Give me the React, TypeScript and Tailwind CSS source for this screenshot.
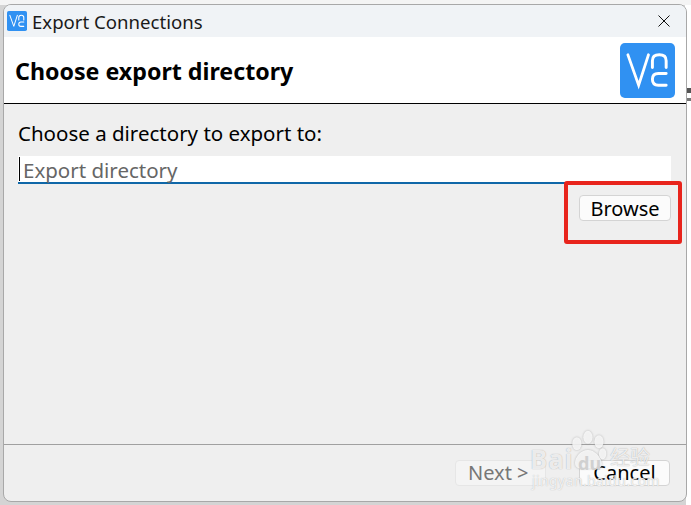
const font = { fontFamily: '"Noto Sans", "Noto Sans CJK SC", sans-serif' };

function VncLogo({ className }: { className?: string }) {
  return (
    <svg viewBox="0 0 56 56" className={className}>
      <rect width="56" height="56" rx="5" fill="#3091f2" />
      <g fill="none" stroke="#fff" strokeWidth="3" strokeLinecap="round">
        <path d="M8 12 L19 43 L29 12" strokeWidth="2.8" />
        <path d="M33 25 V18 Q33 12 40 12 Q47 12 47 18 V25" />
        <path d="M47 31 H39 Q33 31 33 37 Q33 43 39 43 H47" />
      </g>
    </svg>
  );
}

function Watermark() {
  return (
    <div className="absolute left-[528px] top-[428px] h-[70px] w-[130px] text-white/80" style={font}>
      <svg viewBox="0 0 50 50" className="absolute left-[36px] top-0 h-[46px] w-[46px] drop-shadow-[0_0_1px_rgba(120,120,120,0.6)]" fill="currentColor">
        <ellipse cx="14" cy="17" rx="5" ry="7" />
        <ellipse cx="26" cy="10" rx="5" ry="7" />
        <ellipse cx="38" cy="15" rx="5" ry="7" />
        <ellipse cx="42" cy="28" rx="4" ry="6" />
        <path d="M26 24 C18 24 12 32 12 38 C12 46 22 44 27 44 C33 44 42 46 41 38 C40 31 33 24 26 24 Z" />
      </svg>
      <span className="absolute left-[2px] top-[13px] text-[26px] font-bold leading-[36px] tracking-[1px] [text-shadow:0_0_1px_#999]">Bai</span>
      <span className="absolute left-[50px] top-[22px] text-[18px] font-bold leading-[26px] text-[#d0d0d0]">du</span>
      <span className="absolute left-[82px] top-[17px] text-[20px] leading-[26px] [text-shadow:0_0_1px_#999]">经验</span>
      <span className="absolute left-[4px] top-[43px] text-[14px] leading-[20px] tracking-[0.4px] [text-shadow:0_0_1px_#aaa]">jingyan.baidu.com</span>
    </div>
  );
}

export default function App() {
  return (
    <div className="relative h-[505px] w-[691px] overflow-hidden bg-[#d4d4d4]" style={font}>
      <div className="absolute right-0 top-0 h-[130px] w-[6px] bg-white" />
      <div className="absolute right-0 top-[88px] h-[5px] w-[6px] bg-[#555]" />
      <div className="absolute right-0 top-[98px] h-[3px] w-[6px] bg-[#777]" />
      <div className="absolute right-0 top-[130px] h-[375px] w-[5px] bg-white" />
      <div className="absolute left-0 top-0 h-[5px] w-full bg-[#f4f4f4]" />

      <div className="relative ml-[3px] mt-[4px] flex h-[498px] w-[684px] flex-col overflow-hidden rounded-[8px] border border-[#a8a8a8] bg-[#efefef]">
        <div className="flex h-[32px] shrink-0 items-center bg-[#f0f3f6] pl-[3px] pr-[16px]">
          <VncLogo className="h-[20px] w-[20px]" />
          <span className="ml-[5px] mt-[1px] text-[18.6px] leading-[24px] text-[#1a1a1a]">Export Connections</span>
          <svg viewBox="0 0 12 12" className="ml-auto h-[12px] w-[12px]" fill="none" stroke="#111" strokeWidth="1">
            <path d="M0.5 0.5 L11.5 11.5 M11.5 0.5 L0.5 11.5" />
          </svg>
        </div>

        <div className="flex h-[67px] shrink-0 items-center justify-between border-b border-black bg-white pl-[11px] pr-[11px]">
          <span className="mt-[2px] text-[23.2px] font-bold leading-[32px] text-black">Choose export directory</span>
          <VncLogo className="h-[55px] w-[55px]" />
        </div>

        <div className="flex flex-1 flex-col px-[14px] pt-[16px]">
          <span className="text-[20.5px] leading-[26px] text-black">Choose a directory to export to:</span>
          <div className="mt-[10px] flex h-[28px] w-[653px] items-center border-b-2 border-[#0f67a8] bg-white pl-[1px]">
            <span className="h-[24px] w-px bg-black" />
            <span className="ml-[3px] mt-[3px] text-[20.5px] leading-[25px] text-[#666]">Export directory</span>
          </div>
          <div className="mt-[11px] flex w-[653px] justify-end">
            <button className="h-[26px] w-[92px] rounded-[4px] border border-[#d4d4d4] bg-[#fbfbfb] pt-[1px] text-[20px] leading-[24px] text-black">
              Browse
            </button>
          </div>
        </div>

        <div className="flex h-[57px] shrink-0 items-start justify-end gap-[33px] border-t border-[#a0a0a0] pr-[16px] pt-[15px]">
          <button className="h-[26px] w-[91px] rounded-[4px] border border-[#e6e6e6] bg-[#f4f4f4] pl-[2px] text-left text-[20px] leading-[24px] text-[#777]">
            <span className="ml-[10px]">Next &gt;</span>
          </button>
          <button className="h-[26px] w-[91px] rounded-[4px] border border-[#d4d4d4] bg-[#fbfbfb] text-[20px] leading-[24px] text-black">
            Cancel
          </button>
        </div>
      </div>

      <div className="absolute left-[564px] top-[181px] h-[63px] w-[118px] rounded-[3px] border-[4px] border-[#e8241c]" />
      <Watermark />
    </div>
  );
}
